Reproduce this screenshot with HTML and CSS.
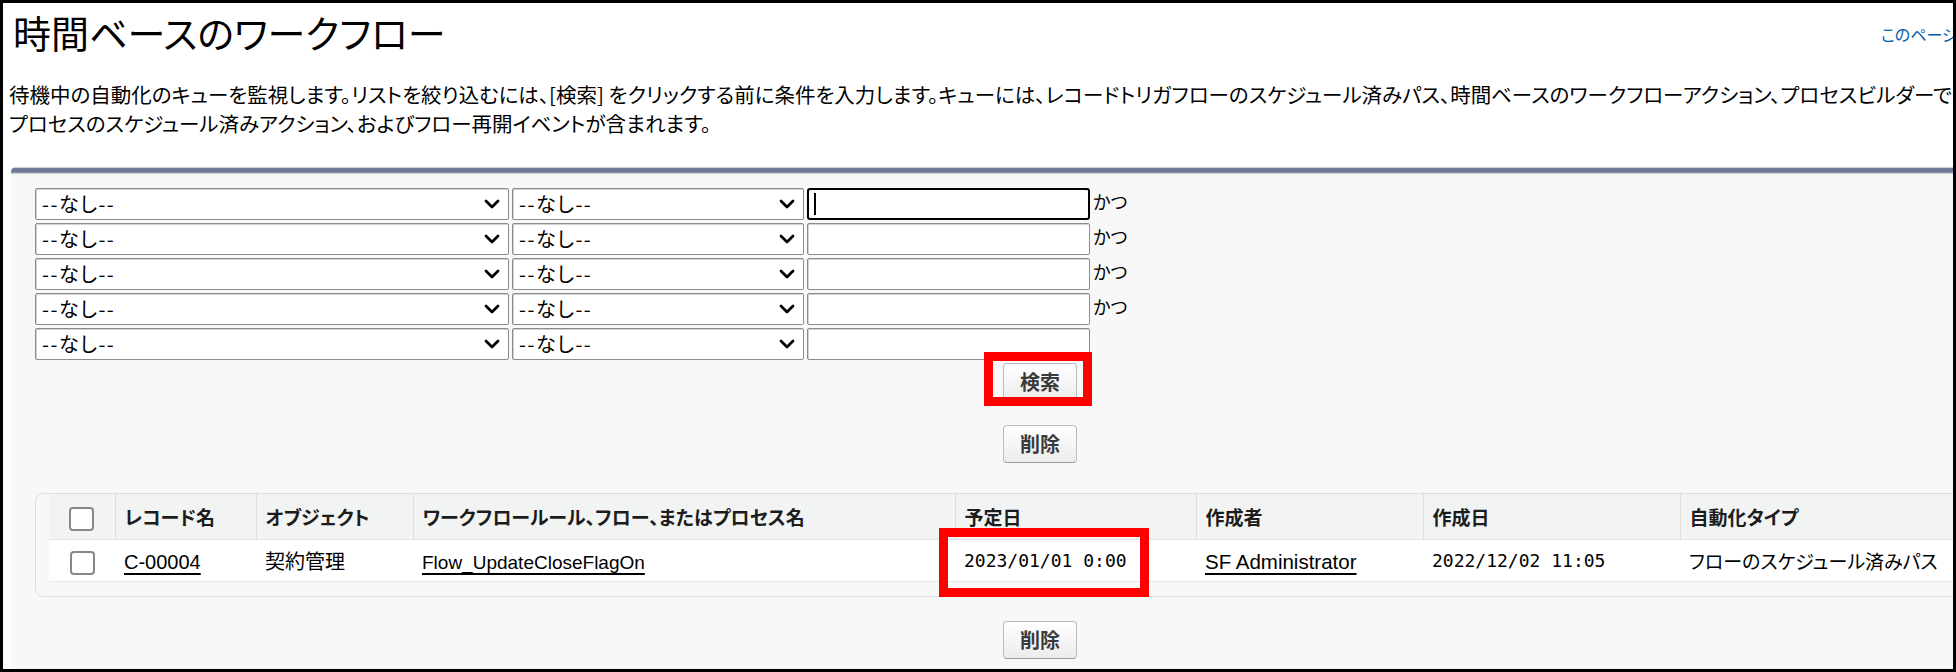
FILE: index.html
```html
<!DOCTYPE html>
<html lang="ja">
<head>
<meta charset="utf-8">
<title>時間ベースのワークフロー</title>
<link rel="stylesheet" href="styles.css">
</head>
<body>
<div class="frame">
  <div class="page">
    <header class="head">
      <h1 class="title">時間ベースのワークフロー</h1>
      <a class="help" href="#">このページのヘルプ</a>
    </header>
    <p class="desc">待機中の自動化のキューを監視します。リストを絞り込むには、[検索] をクリックする前に条件を入力します。キューには、レコードトリガフローのスケジュール済みパス、時間ベースのワークフローアクション、プロセスビルダーで作成した<br>プロセスのスケジュール済みアクション、およびフロー再開イベントが含まれます。</p>
    <section class="panel">
      <div class="bar"></div>
      <div class="panel-body">
        <div class="filters">
          <div class="sel sel-wide"><span class="sel-text">--なし--</span><svg class="chev" viewBox="0 0 16 10" width="16" height="10"><polyline points="2,2 8,8 14,2"/></svg></div>
          <div class="sel"><span class="sel-text">--なし--</span><svg class="chev" viewBox="0 0 16 10" width="16" height="10"><polyline points="2,2 8,8 14,2"/></svg></div>
          <div class="inp inp-focus"><span class="caret"></span></div>
          <span class="and">かつ</span>

          <div class="sel sel-wide"><span class="sel-text">--なし--</span><svg class="chev" viewBox="0 0 16 10" width="16" height="10"><polyline points="2,2 8,8 14,2"/></svg></div>
          <div class="sel"><span class="sel-text">--なし--</span><svg class="chev" viewBox="0 0 16 10" width="16" height="10"><polyline points="2,2 8,8 14,2"/></svg></div>
          <div class="inp"></div>
          <span class="and">かつ</span>

          <div class="sel sel-wide"><span class="sel-text">--なし--</span><svg class="chev" viewBox="0 0 16 10" width="16" height="10"><polyline points="2,2 8,8 14,2"/></svg></div>
          <div class="sel"><span class="sel-text">--なし--</span><svg class="chev" viewBox="0 0 16 10" width="16" height="10"><polyline points="2,2 8,8 14,2"/></svg></div>
          <div class="inp"></div>
          <span class="and">かつ</span>

          <div class="sel sel-wide"><span class="sel-text">--なし--</span><svg class="chev" viewBox="0 0 16 10" width="16" height="10"><polyline points="2,2 8,8 14,2"/></svg></div>
          <div class="sel"><span class="sel-text">--なし--</span><svg class="chev" viewBox="0 0 16 10" width="16" height="10"><polyline points="2,2 8,8 14,2"/></svg></div>
          <div class="inp"></div>
          <span class="and">かつ</span>

          <div class="sel sel-wide"><span class="sel-text">--なし--</span><svg class="chev" viewBox="0 0 16 10" width="16" height="10"><polyline points="2,2 8,8 14,2"/></svg></div>
          <div class="sel"><span class="sel-text">--なし--</span><svg class="chev" viewBox="0 0 16 10" width="16" height="10"><polyline points="2,2 8,8 14,2"/></svg></div>
          <div class="inp"></div>
          <span class="and"></span>
        </div>

        <div class="btnrow btnrow-search">
          <span class="btnwrap"><button class="btn" type="button">検索</button><span class="mark mark-search"></span></span>
        </div>
        <div class="btnrow btnrow-del1">
          <button class="btn" type="button">削除</button>
        </div>

        <div class="tablebox">
          <table class="grid">
            <colgroup>
              <col class="c-cb"><col class="c-name"><col class="c-obj"><col class="c-flow"><col class="c-date"><col class="c-by"><col class="c-created"><col class="c-type">
            </colgroup>
            <thead>
              <tr>
                <th class="cbcell"><span class="cb"></span></th>
                <th>レコード名</th>
                <th>オブジェクト</th>
                <th>ワークフロールール、フロー、またはプロセス名</th>
                <th>予定日</th>
                <th>作成者</th>
                <th>作成日</th>
                <th>自動化タイプ</th>
              </tr>
            </thead>
            <tbody>
              <tr>
                <td class="cbcell"><span class="cb"></span></td>
                <td><a class="lnk lnk-id" href="#">C-00004</a></td>
                <td class="jp-wide">契約管理</td>
                <td><a class="lnk" href="#">Flow_UpdateCloseFlagOn</a></td>
                <td class="num datecell">2023/01/01 0:00<span class="mark mark-date"></span></td>
                <td><a class="lnk lnk-user" href="#">SF Administrator</a></td>
                <td class="num">2022/12/02 11:05</td>
                <td class="jp-type">フローのスケジュール済みパス</td>
              </tr>
            </tbody>
          </table>
        </div>

        <div class="btnrow btnrow-del2">
          <button class="btn" type="button">削除</button>
        </div>
      </div>
    </section>
  </div>
</div>
</body>
</html>
```

FILE: styles.css
```css
* { box-sizing: border-box; }

html, body {
  margin: 0;
  padding: 0;
  background: #fff;
}

body {
  font-family: "Noto Sans CJK JP", "Liberation Sans", sans-serif;
  color: #000;
  font-feature-settings: "palt" 1;
}

.frame {
  width: 1956px;
  height: 672px;
  border: 3px solid #000;
  overflow: hidden;
  background: #fff;
}

.page {
  width: 2060px;
}

/* ---------- heading ---------- */
.head {
  display: grid;
  grid-template-columns: 1868px auto;
  align-items: start;
  padding: 7px 0 0 10px;
}

.title {
  margin: 0;
  font-size: 38px;
  line-height: 44px;
  font-weight: 400;
}

.help {
  margin-top: 14px;
  font-size: 16px;
  line-height: 20px;
  color: #015ba7;
  text-decoration: none;
  white-space: nowrap;
}

.desc {
  margin: 26px 0 29px 6px;
  font-size: 20.5px;
  line-height: 29px;
  white-space: nowrap;
}

/* ---------- panel ---------- */
.panel {
  margin-left: 8px;
  width: 2058px;
  min-height: 600px;
  background: #f8f8f8;
}

.bar {
  height: 7px;
  border-top-left-radius: 5px;
  background: linear-gradient(#c9ced8 0, #c9ced8 1px, #707d98 1px, #6b7893 5px, #aeb6c6 6px, #dfe2e8 7px);
}

.panel-body {
  padding-top: 14px;
}

/* ---------- filters ---------- */
.filters {
  margin-left: 24px;
  display: grid;
  grid-template-columns: 474px 292px 283px auto;
  grid-auto-rows: 32px;
  column-gap: 3px;
  row-gap: 3px;
}

.sel {
  display: flex;
  align-items: center;
  justify-content: space-between;
  padding: 0 8px 0 6px;
  background: #fff;
  border: 1px solid #8c8c8c;
  border-radius: 2px;
  box-shadow: inset 1px 1px 0 #d2d2d2;
}

.sel-text {
  font-family: "Noto Sans CJK JP", sans-serif;
  font-size: 20px;
  letter-spacing: 1.5px;
  line-height: 1;
}

.chev {
  display: block;
  fill: none;
  stroke: #000;
  stroke-width: 2.8;
  stroke-linecap: round;
  stroke-linejoin: round;
}

.inp {
  background: #fff;
  border: 1px solid #8c8c8c;
  border-radius: 2px;
  box-shadow: inset 1px 1px 0 #d2d2d2;
}

.inp-focus {
  display: flex;
  align-items: center;
  padding-left: 5px;
  border: 2px solid #000;
  border-radius: 3px;
  box-shadow: none;
}

.caret {
  width: 2px;
  height: 22px;
  background: #000;
}

.and {
  font-size: 18px;
  line-height: 24px;
  padding-top: 1px;
  white-space: nowrap;
}

/* ---------- buttons ---------- */
.btnrow {
  display: flex;
  justify-content: center;
}

.btnrow-search { margin-top: 3px; }
.btnrow-del1 { margin-top: 24px; }
.btnrow-del2 { margin-top: 24px; }

.btnwrap {
  position: relative;
  display: inline-block;
  line-height: 0;
}

.btn {
  width: 74px;
  height: 38px;
  padding: 0;
  font-family: "Noto Sans CJK JP", sans-serif;
  font-size: 20px;
  font-weight: 700;
  line-height: 1;
  color: #3a3a3a;
  background: linear-gradient(#ffffff, #ececec);
  border: 1px solid #bcbcbc;
  border-bottom-color: #9c9c9c;
  border-radius: 4px;
}

.mark {
  position: absolute;
  border: 9px solid #ff0000;
  pointer-events: none;
}

.mark-search {
  left: -19px;
  top: -11px;
  width: 108px;
  height: 54px;
}

/* ---------- table ---------- */
.tablebox {
  margin: 30px 0 0 24px;
  padding: 0 0 14px 13px;
  border: 1px solid #dedfe0;
  border-radius: 8px;
  background: #f8f8f8;
}

.grid {
  border-collapse: collapse;
  table-layout: fixed;
  width: 1990px;
}

.c-cb { width: 66px; }
.c-name { width: 141px; }
.c-obj { width: 157px; }
.c-flow { width: 542px; }
.c-date { width: 241px; }
.c-by { width: 227px; }
.c-created { width: 257px; }
.c-type { width: 359px; }

.grid th {
  height: 45px;
  padding: 0 8px 0 9px;
  background: #f2f3f3;
  border-right: 1px solid #dcdedf;
  border-bottom: 1px solid #e3e4e4;
  text-align: left;
  font-size: 19px;
  font-weight: 700;
  color: #1c1c1c;
  white-space: nowrap;
}

.grid td {
  height: 42px;
  padding: 0 8px 0 9px;
  background: #fff;
  border-bottom: 1px solid #e6e7e7;
  font-size: 20px;
  white-space: nowrap;
}

.grid .cbcell {
  padding: 0;
  text-align: center;
}

.cb {
  display: inline-block;
  width: 25px;
  height: 24px;
  vertical-align: middle;
  background: #fff;
  border: 2px solid #878787;
  border-radius: 4px;
}

.lnk {
  font-family: "Liberation Sans", sans-serif;
  font-size: 19px;
  color: #000;
  text-decoration: underline;
  text-decoration-thickness: 2px;
  text-underline-offset: 4px;
}

.lnk-id { font-size: 20px; }
.lnk-user { font-size: 20.5px; }

.jp-wide { font-size: 21px; }
.grid td.jp-type { font-size: 19px; }

.grid td.num {
  font-family: "DejaVu Sans Mono", monospace;
  font-size: 18px;
}

.grid td.datecell {
  position: relative;
}

.mark-date {
  left: -16px;
  top: -12px;
  width: 210px;
  height: 69px;
}
```
